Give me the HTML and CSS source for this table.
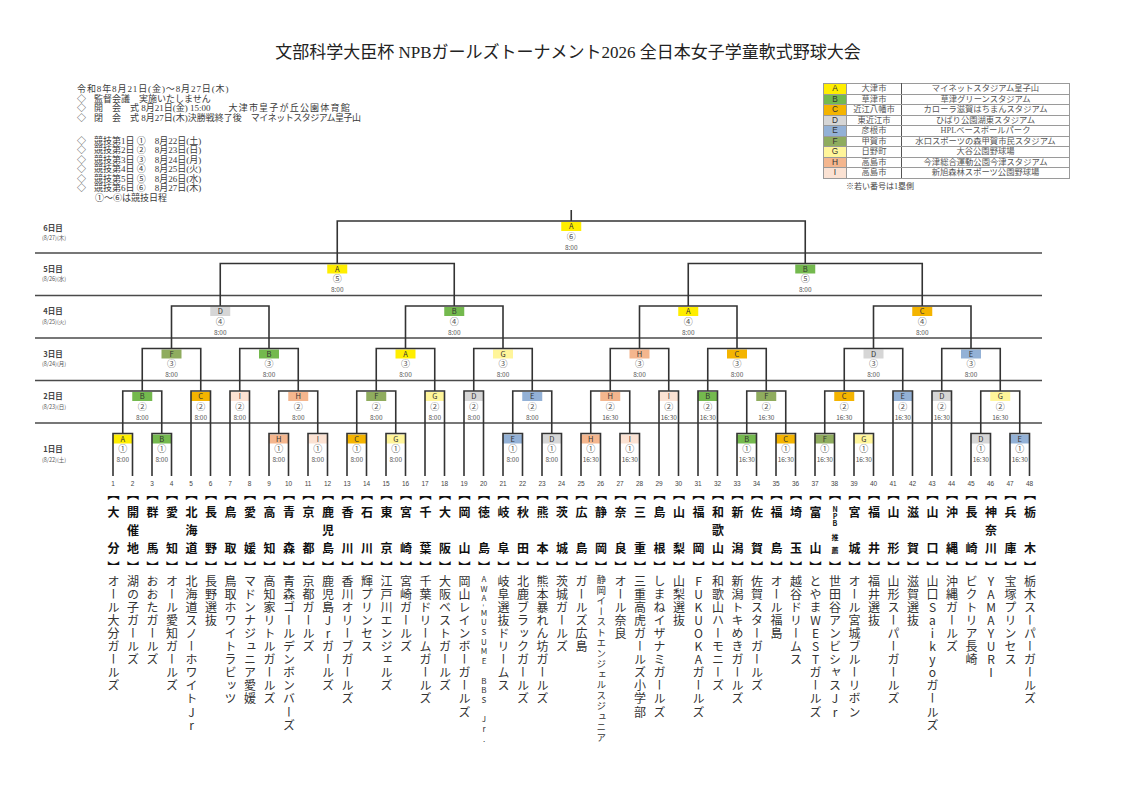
FILE: index.html
```html
<!DOCTYPE html>
<html lang="ja">
<head>
<meta charset="utf-8">
<title>文部科学大臣杯 NPBガールズトーナメント2026</title>
<link rel="stylesheet" href="styles.css">
</head>
<body>
<div class="page">
  <header class="header">
    <h1 class="title">文部科学大臣杯 NPBガールズトーナメント2026 全日本女子学童軟式野球大会</h1>
    <div class="info-row">
      <div class="info">
        <div class="grp g1">
          <div class="wide">令和8年8月21日(金)〜8月27日(木)</div>
          <div><span class="dia">◇</span>監督会議　実施いたしません</div>
          <div><span class="dia">◇</span>開　会　式 8月21日(金) 15:00　　<span class="wide1">大津市皇子が丘公園体育館</span></div>
          <div><span class="dia">◇</span>閉　会　式 8月27日(木)決勝戦終了後　<span class="tight">マイネットスタジアム皇子山</span></div>
        </div>
        <div class="grp g2">
          <div><span class="dia">◇</span>競技第1日 ①　8月22日(土)</div>
          <div><span class="dia">◇</span>競技第2日 ②　8月23日(日)</div>
          <div><span class="dia">◇</span>競技第3日 ③　8月24日(月)</div>
          <div><span class="dia">◇</span>競技第4日 ④　8月25日(火)</div>
          <div><span class="dia">◇</span>競技第5日 ⑤　8月26日(水)</div>
          <div><span class="dia">◇</span>競技第6日 ⑥　8月27日(木)</div>
          <div class="ind">①〜⑥は競技日程</div>
        </div>
      </div>
      <div class="legend-wrap">
        <table class="legend">
          <tr><td class="lk kA">A</td><td class="city">大津市</td><td class="stad">マイネットスタジアム皇子山</td></tr>
          <tr><td class="lk kB">B</td><td class="city">草津市</td><td class="stad">草津グリーンスタジアム</td></tr>
          <tr><td class="lk kC">C</td><td class="city">近江八幡市</td><td class="stad">カローラ滋賀はちまんスタジアム</td></tr>
          <tr><td class="lk kD">D</td><td class="city">東近江市</td><td class="stad">ひばり公園湖東スタジアム</td></tr>
          <tr><td class="lk kE">E</td><td class="city">彦根市</td><td class="stad">HPLベースボールパーク</td></tr>
          <tr><td class="lk kF">F</td><td class="city">甲賀市</td><td class="stad">水口スポーツの森甲賀市民スタジアム</td></tr>
          <tr><td class="lk kG">G</td><td class="city">日野町</td><td class="stad">大谷公園野球場</td></tr>
          <tr><td class="lk kH">H</td><td class="city">高島市</td><td class="stad">今津総合運動公園今津スタジアム</td></tr>
          <tr><td class="lk kI">I</td><td class="city">高島市</td><td class="stad">新旭森林スポーツ公園野球場</td></tr>
        </table>
        <div class="note">※若い番号は1塁側</div>
      </div>
    </div>
  </header>

  <svg class="bracket" width="1130" height="288" viewBox="0 205 1130 288" xmlns="http://www.w3.org/2000/svg">
    <g class="sep">
      <line x1="35" y1="253" x2="1042" y2="253"/>
      <line x1="35" y1="295.5" x2="1042" y2="295.5"/>
      <line x1="35" y1="338" x2="1042" y2="338"/>
      <line x1="35" y1="380.5" x2="1042" y2="380.5"/>
      <line x1="35" y1="423" x2="1042" y2="423"/>
    </g>
    <g class="rows">
      <text class="rl" x="53" y="230.8">6日目</text><text class="rd" x="54" y="240">(8/27)(木)</text>
      <text class="rl" x="53" y="271.8">5日目</text><text class="rd" x="54" y="281">(8/26)(水)</text>
      <text class="rl" x="53" y="314.3">4日目</text><text class="rd" x="54" y="323.5">(8/25)(火)</text>
      <text class="rl" x="53" y="356.8">3日目</text><text class="rd" x="54" y="366">(8/24)(月)</text>
      <text class="rl" x="53" y="399.3">2日目</text><text class="rd" x="54" y="408.5">(8/23)(日)</text>
      <text class="rl" x="53" y="451.8">1日目</text><text class="rd" x="54" y="462">(8/22)(土)</text>
    </g>

    <!-- round 6 -->
    <g transform="translate(571.25 210.5)"><rect class="fA" x="-10" y="11.5" width="20" height="9"/><text class="lt" y="18.8">A</text><text class="cn" y="29">⑥</text><text class="tm" y="39.3">8:00</text></g>
    <!-- round 5 -->
    <g transform="translate(337.25 253)"><rect class="fA" x="-10" y="11.5" width="20" height="9"/><text class="lt" y="18.8">A</text><text class="cn" y="29">⑤</text><text class="tm" y="39.3">8:00</text></g>
    <g transform="translate(805.25 253)"><rect class="fB" x="-10" y="11.5" width="20" height="9"/><text class="lt" y="18.8">B</text><text class="cn" y="29">⑤</text><text class="tm" y="39.3">8:00</text></g>
    <!-- round 4 -->
    <g transform="translate(220.25 295.5)"><rect class="fD" x="-10" y="11.5" width="20" height="9"/><text class="lt" y="18.8">D</text><text class="cn" y="29">④</text><text class="tm" y="39.3">8:00</text></g>
    <g transform="translate(454.25 295.5)"><rect class="fB" x="-10" y="11.5" width="20" height="9"/><text class="lt" y="18.8">B</text><text class="cn" y="29">④</text><text class="tm" y="39.3">8:00</text></g>
    <g transform="translate(688.25 295.5)"><rect class="fA" x="-10" y="11.5" width="20" height="9"/><text class="lt" y="18.8">A</text><text class="cn" y="29">④</text><text class="tm" y="39.3">8:00</text></g>
    <g transform="translate(922.25 295.5)"><rect class="fC" x="-10" y="11.5" width="20" height="9"/><text class="lt" y="18.8">C</text><text class="cn" y="29">④</text><text class="tm" y="39.3">8:00</text></g>
    <!-- round 3 -->
    <g transform="translate(171.5 338)"><rect class="fF" x="-10" y="11.5" width="20" height="9"/><text class="lt" y="18.8">F</text><text class="cn" y="29">③</text><text class="tm" y="39.3">8:00</text></g>
    <g transform="translate(269 338)"><rect class="fB" x="-10" y="11.5" width="20" height="9"/><text class="lt" y="18.8">B</text><text class="cn" y="29">③</text><text class="tm" y="39.3">8:00</text></g>
    <g transform="translate(405.5 338)"><rect class="fA" x="-10" y="11.5" width="20" height="9"/><text class="lt" y="18.8">A</text><text class="cn" y="29">③</text><text class="tm" y="39.3">8:00</text></g>
    <g transform="translate(503 338)"><rect class="fG" x="-10" y="11.5" width="20" height="9"/><text class="lt" y="18.8">G</text><text class="cn" y="29">③</text><text class="tm" y="39.3">8:00</text></g>
    <g transform="translate(639.5 338)"><rect class="fH" x="-10" y="11.5" width="20" height="9"/><text class="lt" y="18.8">H</text><text class="cn" y="29">③</text><text class="tm" y="39.3">8:00</text></g>
    <g transform="translate(737 338)"><rect class="fC" x="-10" y="11.5" width="20" height="9"/><text class="lt" y="18.8">C</text><text class="cn" y="29">③</text><text class="tm" y="39.3">8:00</text></g>
    <g transform="translate(873.5 338)"><rect class="fD" x="-10" y="11.5" width="20" height="9"/><text class="lt" y="18.8">D</text><text class="cn" y="29">③</text><text class="tm" y="39.3">8:00</text></g>
    <g transform="translate(971 338)"><rect class="fE" x="-10" y="11.5" width="20" height="9"/><text class="lt" y="18.8">E</text><text class="cn" y="29">③</text><text class="tm" y="39.3">8:00</text></g>
    <!-- round 2 -->
    <g transform="translate(142.25 380.5)"><rect class="fB" x="-10" y="11.5" width="20" height="9"/><text class="lt" y="18.8">B</text><text class="cn" y="29">②</text><text class="tm" y="39.3">8:00</text></g>
    <g transform="translate(200.75 380.5)"><rect class="fC" x="-10" y="11.5" width="20" height="9"/><text class="lt" y="18.8">C</text><text class="cn" y="29">②</text><text class="tm" y="39.3">8:00</text></g>
    <g transform="translate(239.75 380.5)"><rect class="fI" x="-10" y="11.5" width="20" height="9"/><text class="lt" y="18.8">I</text><text class="cn" y="29">②</text><text class="tm" y="39.3">8:00</text></g>
    <g transform="translate(298.25 380.5)"><rect class="fH" x="-10" y="11.5" width="20" height="9"/><text class="lt" y="18.8">H</text><text class="cn" y="29">②</text><text class="tm" y="39.3">8:00</text></g>
    <g transform="translate(376.25 380.5)"><rect class="fF" x="-10" y="11.5" width="20" height="9"/><text class="lt" y="18.8">F</text><text class="cn" y="29">②</text><text class="tm" y="39.3">8:00</text></g>
    <g transform="translate(434.75 380.5)"><rect class="fG" x="-10" y="11.5" width="20" height="9"/><text class="lt" y="18.8">G</text><text class="cn" y="29">②</text><text class="tm" y="39.3">8:00</text></g>
    <g transform="translate(473.75 380.5)"><rect class="fD" x="-10" y="11.5" width="20" height="9"/><text class="lt" y="18.8">D</text><text class="cn" y="29">②</text><text class="tm" y="39.3">8:00</text></g>
    <g transform="translate(532.25 380.5)"><rect class="fE" x="-10" y="11.5" width="20" height="9"/><text class="lt" y="18.8">E</text><text class="cn" y="29">②</text><text class="tm" y="39.3">8:00</text></g>
    <g transform="translate(610.25 380.5)"><rect class="fH" x="-10" y="11.5" width="20" height="9"/><text class="lt" y="18.8">H</text><text class="cn" y="29">②</text><text class="tm" y="39.3">16:30</text></g>
    <g transform="translate(668.75 380.5)"><rect class="fI" x="-10" y="11.5" width="20" height="9"/><text class="lt" y="18.8">I</text><text class="cn" y="29">②</text><text class="tm" y="39.3">16:30</text></g>
    <g transform="translate(707.75 380.5)"><rect class="fB" x="-10" y="11.5" width="20" height="9"/><text class="lt" y="18.8">B</text><text class="cn" y="29">②</text><text class="tm" y="39.3">16:30</text></g>
    <g transform="translate(766.25 380.5)"><rect class="fF" x="-10" y="11.5" width="20" height="9"/><text class="lt" y="18.8">F</text><text class="cn" y="29">②</text><text class="tm" y="39.3">16:30</text></g>
    <g transform="translate(844.25 380.5)"><rect class="fC" x="-10" y="11.5" width="20" height="9"/><text class="lt" y="18.8">C</text><text class="cn" y="29">②</text><text class="tm" y="39.3">16:30</text></g>
    <g transform="translate(902.75 380.5)"><rect class="fE" x="-10" y="11.5" width="20" height="9"/><text class="lt" y="18.8">E</text><text class="cn" y="29">②</text><text class="tm" y="39.3">16:30</text></g>
    <g transform="translate(941.75 380.5)"><rect class="fD" x="-10" y="11.5" width="20" height="9"/><text class="lt" y="18.8">D</text><text class="cn" y="29">②</text><text class="tm" y="39.3">16:30</text></g>
    <g transform="translate(1000.25 380.5)"><rect class="fG" x="-10" y="11.5" width="20" height="9"/><text class="lt" y="18.8">G</text><text class="cn" y="29">②</text><text class="tm" y="39.3">16:30</text></g>
    <!-- round 1 -->
    <g transform="translate(122.75 423)"><rect class="fA" x="-10" y="11.5" width="20" height="9"/><text class="lt" y="18.8">A</text><text class="cn" y="29">①</text><text class="tm" y="39.3">8:00</text></g>
    <g transform="translate(161.75 423)"><rect class="fB" x="-10" y="11.5" width="20" height="9"/><text class="lt" y="18.8">B</text><text class="cn" y="29">①</text><text class="tm" y="39.3">8:00</text></g>
    <g transform="translate(278.75 423)"><rect class="fH" x="-10" y="11.5" width="20" height="9"/><text class="lt" y="18.8">H</text><text class="cn" y="29">①</text><text class="tm" y="39.3">8:00</text></g>
    <g transform="translate(317.75 423)"><rect class="fI" x="-10" y="11.5" width="20" height="9"/><text class="lt" y="18.8">I</text><text class="cn" y="29">①</text><text class="tm" y="39.3">8:00</text></g>
    <g transform="translate(356.75 423)"><rect class="fC" x="-10" y="11.5" width="20" height="9"/><text class="lt" y="18.8">C</text><text class="cn" y="29">①</text><text class="tm" y="39.3">8:00</text></g>
    <g transform="translate(395.75 423)"><rect class="fG" x="-10" y="11.5" width="20" height="9"/><text class="lt" y="18.8">G</text><text class="cn" y="29">①</text><text class="tm" y="39.3">8:00</text></g>
    <g transform="translate(512.75 423)"><rect class="fE" x="-10" y="11.5" width="20" height="9"/><text class="lt" y="18.8">E</text><text class="cn" y="29">①</text><text class="tm" y="39.3">8:00</text></g>
    <g transform="translate(551.75 423)"><rect class="fD" x="-10" y="11.5" width="20" height="9"/><text class="lt" y="18.8">D</text><text class="cn" y="29">①</text><text class="tm" y="39.3">8:00</text></g>
    <g transform="translate(590.75 423)"><rect class="fH" x="-10" y="11.5" width="20" height="9"/><text class="lt" y="18.8">H</text><text class="cn" y="29">①</text><text class="tm" y="39.3">16:30</text></g>
    <g transform="translate(629.75 423)"><rect class="fI" x="-10" y="11.5" width="20" height="9"/><text class="lt" y="18.8">I</text><text class="cn" y="29">①</text><text class="tm" y="39.3">16:30</text></g>
    <g transform="translate(746.75 423)"><rect class="fB" x="-10" y="11.5" width="20" height="9"/><text class="lt" y="18.8">B</text><text class="cn" y="29">①</text><text class="tm" y="39.3">16:30</text></g>
    <g transform="translate(785.75 423)"><rect class="fC" x="-10" y="11.5" width="20" height="9"/><text class="lt" y="18.8">C</text><text class="cn" y="29">①</text><text class="tm" y="39.3">16:30</text></g>
    <g transform="translate(824.75 423)"><rect class="fF" x="-10" y="11.5" width="20" height="9"/><text class="lt" y="18.8">F</text><text class="cn" y="29">①</text><text class="tm" y="39.3">16:30</text></g>
    <g transform="translate(863.75 423)"><rect class="fG" x="-10" y="11.5" width="20" height="9"/><text class="lt" y="18.8">G</text><text class="cn" y="29">①</text><text class="tm" y="39.3">16:30</text></g>
    <g transform="translate(980.75 423)"><rect class="fD" x="-10" y="11.5" width="20" height="9"/><text class="lt" y="18.8">D</text><text class="cn" y="29">①</text><text class="tm" y="39.3">16:30</text></g>
    <g transform="translate(1019.75 423)"><rect class="fE" x="-10" y="11.5" width="20" height="9"/><text class="lt" y="18.8">E</text><text class="cn" y="29">①</text><text class="tm" y="39.3">16:30</text></g>

    <path class="ln" d="
      M113 476V433.5H132.5V476 M152 476V433.5H171.5V476 M269 476V433.5H288.5V476 M308 476V433.5H327.5V476
      M347 476V433.5H366.5V476 M386 476V433.5H405.5V476 M503 476V433.5H522.5V476 M542 476V433.5H561.5V476
      M581 476V433.5H600.5V476 M620 476V433.5H639.5V476 M737 476V433.5H756.5V476 M776 476V433.5H795.5V476
      M815 476V433.5H834.5V476 M854 476V433.5H873.5V476 M971 476V433.5H990.5V476 M1010 476V433.5H1029.5V476
      M122.75 433.5V391H161.75V433.5 M191 476V391H210.5V476 M230 476V391H249.5V476 M278.75 433.5V391H317.75V433.5
      M356.75 433.5V391H395.75V433.5 M425 476V391H444.5V476 M464 476V391H483.5V476 M512.75 433.5V391H551.75V433.5
      M590.75 433.5V391H629.75V433.5 M659 476V391H678.5V476 M698 476V391H717.5V476 M746.75 433.5V391H785.75V433.5
      M824.75 433.5V391H863.75V433.5 M893 476V391H912.5V476 M932 476V391H951.5V476 M980.75 433.5V391H1019.75V433.5
      M142.25 391V348.5H200.75V391 M239.75 391V348.5H298.25V391 M376.25 391V348.5H434.75V391 M473.75 391V348.5H532.25V391
      M610.25 391V348.5H668.75V391 M707.75 391V348.5H766.25V391 M844.25 391V348.5H902.75V391 M941.75 391V348.5H1000.25V391
      M171.5 348.5V306H269V348.5 M405.5 348.5V306H503V348.5 M639.5 348.5V306H737V348.5 M873.5 348.5V306H971V348.5
      M220.25 306V263.5H454.25V306 M688.25 306V263.5H922.25V306
      M337.25 263.5V221H805.25V263.5 M571.25 221V210"/>

    <g class="nums">
      <text x="113" y="485.5">1</text><text x="132.5" y="485.5">2</text><text x="152" y="485.5">3</text><text x="171.5" y="485.5">4</text>
      <text x="191" y="485.5">5</text><text x="210.5" y="485.5">6</text><text x="230" y="485.5">7</text><text x="249.5" y="485.5">8</text>
      <text x="269" y="485.5">9</text><text x="288.5" y="485.5">10</text><text x="308" y="485.5">11</text><text x="327.5" y="485.5">12</text>
      <text x="347" y="485.5">13</text><text x="366.5" y="485.5">14</text><text x="386" y="485.5">15</text><text x="405.5" y="485.5">16</text>
      <text x="425" y="485.5">17</text><text x="444.5" y="485.5">18</text><text x="464" y="485.5">19</text><text x="483.5" y="485.5">20</text>
      <text x="503" y="485.5">21</text><text x="522.5" y="485.5">22</text><text x="542" y="485.5">23</text><text x="561.5" y="485.5">24</text>
      <text x="581" y="485.5">25</text><text x="600.5" y="485.5">26</text><text x="620" y="485.5">27</text><text x="639.5" y="485.5">28</text>
      <text x="659" y="485.5">29</text><text x="678.5" y="485.5">30</text><text x="698" y="485.5">31</text><text x="717.5" y="485.5">32</text>
      <text x="737" y="485.5">33</text><text x="756.5" y="485.5">34</text><text x="776" y="485.5">35</text><text x="795.5" y="485.5">36</text>
      <text x="815" y="485.5">37</text><text x="834.5" y="485.5">38</text><text x="854" y="485.5">39</text><text x="873.5" y="485.5">40</text>
      <text x="893" y="485.5">41</text><text x="912.5" y="485.5">42</text><text x="932" y="485.5">43</text><text x="951.5" y="485.5">44</text>
      <text x="971" y="485.5">45</text><text x="990.5" y="485.5">46</text><text x="1010" y="485.5">47</text><text x="1029.5" y="485.5">48</text>
    </g>
  </svg>

  <div class="teams">
    <div class="col"><span class="bk">【</span><span class="pref">大分</span><span class="bk">】</span><span class="name">オール大分ガールズ</span></div>
    <div class="col"><span class="bk">【</span><span class="pref">開催地</span><span class="bk">】</span><span class="name">湖の子ガールズ</span></div>
    <div class="col"><span class="bk">【</span><span class="pref">群馬</span><span class="bk">】</span><span class="name">おおたガールズ</span></div>
    <div class="col"><span class="bk">【</span><span class="pref">愛知</span><span class="bk">】</span><span class="name">オール愛知ガールズ</span></div>
    <div class="col"><span class="bk">【</span><span class="pref">北海道</span><span class="bk">】</span><span class="name">北海道スノーホワイトJr</span></div>
    <div class="col"><span class="bk">【</span><span class="pref">長野</span><span class="bk">】</span><span class="name">長野選抜</span></div>
    <div class="col"><span class="bk">【</span><span class="pref">鳥取</span><span class="bk">】</span><span class="name">鳥取ホワイトラビッツ</span></div>
    <div class="col"><span class="bk">【</span><span class="pref">愛媛</span><span class="bk">】</span><span class="name">マドンナジュニア愛媛</span></div>
    <div class="col"><span class="bk">【</span><span class="pref">高知</span><span class="bk">】</span><span class="name">高知家リトルガールズ</span></div>
    <div class="col"><span class="bk">【</span><span class="pref">青森</span><span class="bk">】</span><span class="name">青森ゴールデンボンバーズ</span></div>
    <div class="col"><span class="bk">【</span><span class="pref">京都</span><span class="bk">】</span><span class="name">京都ガールズ</span></div>
    <div class="col"><span class="bk">【</span><span class="pref">鹿児島</span><span class="bk">】</span><span class="name">鹿児島Jrガールズ</span></div>
    <div class="col"><span class="bk">【</span><span class="pref">香川</span><span class="bk">】</span><span class="name">香川オリーブガールズ</span></div>
    <div class="col"><span class="bk">【</span><span class="pref">石川</span><span class="bk">】</span><span class="name">輝プリンセス</span></div>
    <div class="col"><span class="bk">【</span><span class="pref">東京</span><span class="bk">】</span><span class="name">江戸川エンジェルズ</span></div>
    <div class="col"><span class="bk">【</span><span class="pref">宮崎</span><span class="bk">】</span><span class="name">宮崎ガールズ</span></div>
    <div class="col"><span class="bk">【</span><span class="pref">千葉</span><span class="bk">】</span><span class="name">千葉ドリームガールズ</span></div>
    <div class="col"><span class="bk">【</span><span class="pref">大阪</span><span class="bk">】</span><span class="name">大阪ベストガールズ</span></div>
    <div class="col"><span class="bk">【</span><span class="pref">岡山</span><span class="bk">】</span><span class="name">岡山レインボーガールズ</span></div>
    <div class="col"><span class="bk">【</span><span class="pref">徳島</span><span class="bk">】</span><span class="name s8">AWA<span class="sw">-</span>MUSUME BBS Jr.</span></div>
    <div class="col"><span class="bk">【</span><span class="pref">岐阜</span><span class="bk">】</span><span class="name">岐阜選抜ドリームス</span></div>
    <div class="col"><span class="bk">【</span><span class="pref">秋田</span><span class="bk">】</span><span class="name">北鹿ブラックガールズ</span></div>
    <div class="col"><span class="bk">【</span><span class="pref">熊本</span><span class="bk">】</span><span class="name">熊本暴れん坊ガールズ</span></div>
    <div class="col"><span class="bk">【</span><span class="pref">茨城</span><span class="bk">】</span><span class="name">茨城ガールズ</span></div>
    <div class="col"><span class="bk">【</span><span class="pref">広島</span><span class="bk">】</span><span class="name">ガールズ広島</span></div>
    <div class="col"><span class="bk">【</span><span class="pref">静岡</span><span class="bk">】</span><span class="name s9">静岡イーストエンジェルスジュニア</span></div>
    <div class="col"><span class="bk">【</span><span class="pref">奈良</span><span class="bk">】</span><span class="name">オール奈良</span></div>
    <div class="col"><span class="bk">【</span><span class="pref">三重</span><span class="bk">】</span><span class="name">三重高虎ガールズ小学部</span></div>
    <div class="col"><span class="bk">【</span><span class="pref">島根</span><span class="bk">】</span><span class="name">しまねイザナミガールズ</span></div>
    <div class="col"><span class="bk">【</span><span class="pref">山梨</span><span class="bk">】</span><span class="name">山梨選抜</span></div>
    <div class="col"><span class="bk">【</span><span class="pref">福岡</span><span class="bk">】</span><span class="name">FUKUOKAガールズ</span></div>
    <div class="col"><span class="bk">【</span><span class="pref">和歌山</span><span class="bk">】</span><span class="name">和歌山ハーモニーズ</span></div>
    <div class="col"><span class="bk">【</span><span class="pref">新潟</span><span class="bk">】</span><span class="name">新潟トキめきガールズ</span></div>
    <div class="col"><span class="bk">【</span><span class="pref">佐賀</span><span class="bk">】</span><span class="name">佐賀スターガールズ</span></div>
    <div class="col"><span class="bk">【</span><span class="pref">福島</span><span class="bk">】</span><span class="name">オール福島</span></div>
    <div class="col"><span class="bk">【</span><span class="pref">埼玉</span><span class="bk">】</span><span class="name">越谷ドリームス</span></div>
    <div class="col"><span class="bk">【</span><span class="pref">富山</span><span class="bk">】</span><span class="name">とやまWESTガールズ</span></div>
    <div class="col"><span class="bk">【</span><span class="pref npb">NPB推薦</span><span class="bk">】</span><span class="name">世田谷アンビシャスJr</span></div>
    <div class="col"><span class="bk">【</span><span class="pref">宮城</span><span class="bk">】</span><span class="name">オール宮城ブルーリボン</span></div>
    <div class="col"><span class="bk">【</span><span class="pref">福井</span><span class="bk">】</span><span class="name">福井選抜</span></div>
    <div class="col"><span class="bk">【</span><span class="pref">山形</span><span class="bk">】</span><span class="name">山形スーパーガールズ</span></div>
    <div class="col"><span class="bk">【</span><span class="pref">滋賀</span><span class="bk">】</span><span class="name">滋賀選抜</span></div>
    <div class="col"><span class="bk">【</span><span class="pref">山口</span><span class="bk">】</span><span class="name">山口Saikyoガールズ</span></div>
    <div class="col"><span class="bk">【</span><span class="pref">沖縄</span><span class="bk">】</span><span class="name">沖縄ガールズ</span></div>
    <div class="col"><span class="bk">【</span><span class="pref">長崎</span><span class="bk">】</span><span class="name">ビクトリア長崎</span></div>
    <div class="col"><span class="bk">【</span><span class="pref">神奈川</span><span class="bk">】</span><span class="name">YAMAYURI</span></div>
    <div class="col"><span class="bk">【</span><span class="pref">兵庫</span><span class="bk">】</span><span class="name">宝塚プリンセス</span></div>
    <div class="col"><span class="bk">【</span><span class="pref">栃木</span><span class="bk">】</span><span class="name">栃木スーパーガールズ</span></div>
  </div>
</div>
</body>
</html>
```

FILE: styles.css
```css
* { box-sizing: border-box; }
html, body { margin: 0; padding: 0; background: #ffffff; }
body {
  font-family: "Liberation Serif", "Noto Sans CJK JP", serif;
  color: #333;
}
.page { width: 1130px; height: 795px; overflow: hidden; }

.header { height: 205px; padding-top: 43px; }
.title {
  margin: 0;
  font-weight: normal;
  font-size: 17px;
  line-height: 20px;
  text-align: center;
  padding-left: 6px;
  color: #222;
  white-space: nowrap;
}
.info-row {
  display: flex;
  justify-content: space-between;
  align-items: flex-start;
  margin-top: 22px;
  padding-left: 77px;
  padding-right: 60px;
}
.info { font-size: 9px; color: #3a3a3a; white-space: nowrap; }
.grp.g1 { line-height: 9.6px; }
.grp.g2 { line-height: 9.45px; margin-top: 13.5px; }
.wide { letter-spacing: 0.9px; }
.wide1 { letter-spacing: 1.2px; }
.tight { letter-spacing: -0.5px; }
.dia { display: inline-block; width: 17px; }
.ind { padding-left: 18px; }

.legend-wrap { margin-top: -2px; }
.legend {
  border-collapse: collapse;
  border: 1.5px solid #444;
  font-size: 8.3px;
  color: #555;
  table-layout: fixed;
  width: 246px;
}
.legend td {
  border: 1px solid #9a9a9a;
  height: 10.5px;
  padding: 0;
  line-height: 9px;
  text-align: center;
  white-space: nowrap;
}
.legend td.lk { width: 23px; color: #333; font-family: "Liberation Sans", sans-serif; }
.legend td.city { width: 55px; border-right: 1.5px solid #555; }
.legend td.stad { width: 168px; }
.kA, .fA { background: #ffee00; fill: #ffee00; }
.kB, .fB { background: #74b94e; fill: #74b94e; }
.kC, .fC { background: #f4b400; fill: #f4b400; }
.kD, .fD { background: #d6d6d6; fill: #d6d6d6; }
.kE, .fE { background: #93b1d6; fill: #93b1d6; }
.kF, .fF { background: #8fac5e; fill: #8fac5e; }
.kG, .fG { background: #fff59a; fill: #fff59a; }
.kH, .fH { background: #f4b68e; fill: #f4b68e; }
.kI, .fI { background: #fbe2d3; fill: #fbe2d3; }
.note { font-size: 8px; line-height: 10px; margin-top: 3px; padding-left: 23px; color: #444; }

.bracket { display: block; }
.bracket text { text-anchor: middle; font-family: "Noto Sans CJK JP", sans-serif; }
.sep line { stroke: #4a4a4a; stroke-width: 1.4; }
.ln { fill: none; stroke: #333; stroke-width: 1.6; }
.lt { font-size: 7.5px; fill: #333; font-family: "Liberation Sans", sans-serif; }
.cn { font-size: 9px; fill: #555; }
.tm { font-size: 6.5px; fill: #555; }
.rl { font-size: 7.5px; fill: #444; font-weight: bold; }
.rd { font-size: 5.5px; fill: #555; }
.nums text { font-size: 6.5px; fill: #444; font-family: "Liberation Sans", sans-serif; }

.teams {
  display: flex;
  padding-left: 103.25px;
  font-family: "Noto Sans CJK JP", sans-serif;
}
.col {
  flex: 0 0 19.5px;
  display: flex;
  flex-direction: column;
  align-items: center;
}
.bk {
  writing-mode: vertical-rl;
  font-size: 12px;
  font-weight: bold;
  line-height: 1;
  height: 12px;
  color: #111;
}
.bk:first-child { margin-top: -5px; }
.pref {
  writing-mode: vertical-rl;
  height: 48px;
  margin: 6px 0 7px;
  font-size: 12px;
  font-weight: bold;
  line-height: 1;
  text-align: justify;
  text-align-last: justify;
  color: #111;
}
.pref.npb {
  font-size: 7px;
  text-orientation: upright;
}
.name {
  writing-mode: vertical-rl;
  text-orientation: upright;
  font-size: 12px;
  letter-spacing: 1.1px;
  line-height: 1;
  margin-top: 2px;
  color: #333;
}
.name.s9 { font-size: 9.5px; letter-spacing: 1px; }
.name.s8 { font-size: 8px; letter-spacing: 1.7px; }
.sw { text-orientation: sideways; }
```
